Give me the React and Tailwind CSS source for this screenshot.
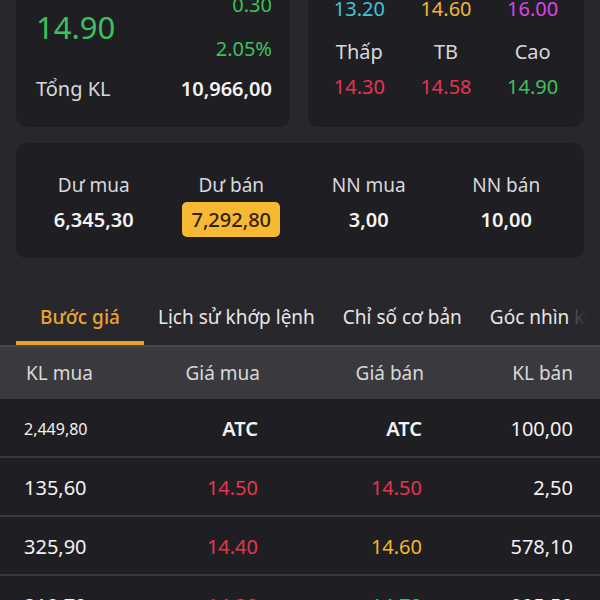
import React from 'react'

// ─── Data ────────────────────────────────────────────────────────────────────

const GREEN = 'text-[#3ec05c]'
const RED = 'text-[#e6344f]'
const YELLOW = 'text-[#f2b632]'

const summary = [
  { label: 'Dư mua', value: '6,345,30' },
  { label: 'Dư bán', value: '7,292,80', badge: true },
  { label: 'NN mua', value: '3,00' },
  { label: 'NN bán', value: '10,00' },
]

const tabs = ['Lịch sử khớp lệnh', 'Chỉ số cơ bản', 'Góc nhìn kỹ thuật']

const rows = [
  { kl: '2,449,80', small: true, buy: 'ATC', buyC: 'text-[#f2f2f2] font-semibold', sell: 'ATC', sellC: 'text-[#f2f2f2] font-semibold', klb: '100,00' },
  { kl: '135,60', buy: '14.50', buyC: RED, sell: '14.50', sellC: RED, klb: '2,50' },
  { kl: '325,90', buy: '14.40', buyC: RED, sell: '14.60', sellC: YELLOW, klb: '578,10' },
  { kl: '310,70', buy: '14.30', buyC: RED, sell: '14.70', sellC: GREEN, klb: '895,50' },
]

// ─── Price card (top right) ──────────────────────────────────────────────────

function PriceGrid() {
  return (
    <div className="flex-1 bg-[#1f1f23] rounded-[10px] px-[8px] pt-[16px] pb-[26px] grid grid-cols-3 text-center text-[20px] leading-[28px] gap-y-[7px]">
      <span className="text-[#d8d8da]">Sàn</span>
      <span className="text-[#d8d8da]">TC</span>
      <span className="text-[#d8d8da]">Trần</span>
      <span className="text-[#3cc7d6]">13.20</span>
      <span className="text-[#f0b633]">14.60</span>
      <span className="text-[#de44e4] mb-[8px]">16.00</span>
      <span className="text-[#d8d8da]">Thấp</span>
      <span className="text-[#d8d8da]">TB</span>
      <span className="text-[#d8d8da]">Cao</span>
      <span className={RED}>14.30</span>
      <span className={RED}>14.58</span>
      <span className={GREEN}>14.90</span>
    </div>
  )
}

// ─── App ─────────────────────────────────────────────────────────────────────

export default function App() {
  return (
    <div
      className="w-[600px] h-[600px] overflow-hidden bg-[#28282c] flex flex-col"
      style={{ fontFamily: '"Noto Sans", "Open Sans", sans-serif' }}
    >
      {/* Top cards */}
      <div className="flex gap-[18px] px-[16px] mt-[-56px] h-[183px] shrink-0">
        <div className="w-[274px] bg-[#1f1f23] rounded-[10px] flex flex-col justify-end pl-[20px] pr-[18px] pb-[24px]">
          <div className="flex items-center justify-between">
            <span className={`text-[31px] leading-[36px] ${GREEN}`}>14.90</span>
            <div className="flex flex-col items-end gap-[16px] text-[20px] leading-[28px]">
              <span className={GREEN}>0.30</span>
              <span className={GREEN}>2.05%</span>
            </div>
          </div>
          <div className="flex items-center justify-between mt-[12px] text-[20px] leading-[28px]">
            <span className="text-[#d8d8da]">Tổng KL</span>
            <span className="text-[#f4f4f4] font-semibold">10,966,00</span>
          </div>
        </div>
        <PriceGrid />
      </div>

      {/* Dư mua / bán */}
      <div className="mx-[16px] mt-[16px] h-[115px] shrink-0 bg-[#1f1f23] rounded-[10px] px-[9px] pt-[28px] grid grid-cols-4">
        {summary.map(s => (
          <div key={s.label} className="flex flex-col items-center">
            <span className="text-[19px] leading-[28px] text-[#d8d8da]">{s.label}</span>
            <div className="mt-[3px] h-[35px] flex items-center">
              {s.badge
                ? <span className="bg-[#f7b834] text-[#2e2208] rounded-[5px] px-[9px] h-[35px] flex items-center text-[20px] font-medium">{s.value}</span>
                : <span className="text-[20px] text-[#f4f4f4] font-semibold">{s.value}</span>}
            </div>
          </div>
        ))}
      </div>

      {/* Tabs */}
      <div className="relative mt-[32px] flex whitespace-nowrap shrink-0 text-[19px] leading-[28px]">
        <div className="shrink-0 ml-[16px] w-[128px] pt-[13px] pb-[10px] border-b-4 border-[#e9a02f] text-center text-[#eca334] font-medium">
          Bước giá
        </div>
        {tabs.map(t => (
          <div key={t} className="shrink-0 px-[14px] pt-[13px] pb-[14px] text-[#e6e6e8]">{t}</div>
        ))}
        <div className="absolute top-0 bottom-0 left-[575px] w-[25px] bg-gradient-to-r from-[#28282c]/80 via-[#28282c] to-[#28282c]" />
      </div>

      {/* Table header */}
      <div className="h-[54px] shrink-0 border-t-2 border-[#47474c] bg-[#3a3a3e] grid grid-cols-[110px_124px_164px_1fr] items-center pl-[26px] pr-[27px] text-[19px] text-[#d8d8da]">
        <span>KL mua</span>
        <span className="text-right">Giá mua</span>
        <span className="text-right">Giá bán</span>
        <span className="text-right">KL bán</span>
      </div>

      {/* Rows */}
      <div className="flex flex-col bg-[#1f1f23]">
        {rows.map(r => (
          <div key={r.kl} className="h-[59px] shrink-0 border-b-2 border-[#38383c] grid grid-cols-[110px_124px_164px_1fr] items-center pt-[2px] pl-[24px] pr-[27px] text-[20px]">
            <span className={r.small ? 'text-[16px] text-[#f2f2f2]' : 'text-[#f2f2f2]'}>{r.kl}</span>
            <span className={`text-right ${r.buyC}`}>{r.buy}</span>
            <span className={`text-right ${r.sellC}`}>{r.sell}</span>
            <span className="text-right text-[#f2f2f2]">{r.klb}</span>
          </div>
        ))}
      </div>
    </div>
  )
}
